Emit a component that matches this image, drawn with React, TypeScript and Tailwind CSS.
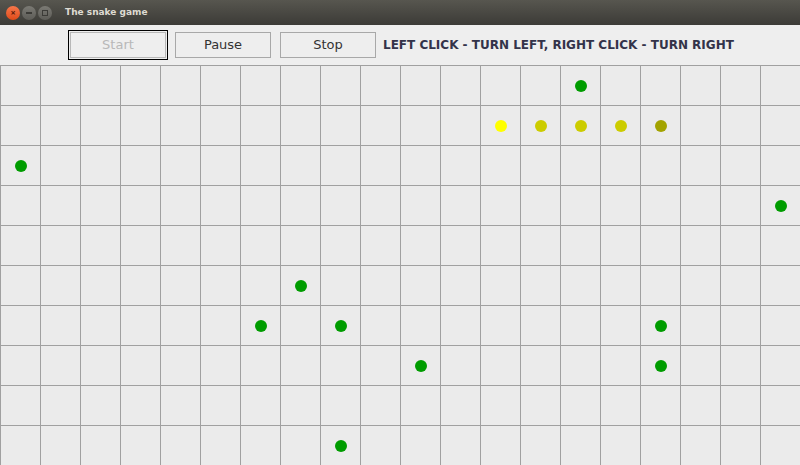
import React from 'react';

type Dot = { col: number; row: number; color: string };

const COLS = 20;
const ROWS = 10;

const dots: Dot[] = [
  { col: 14, row: 0, color: '#009c00' },
  { col: 12, row: 1, color: '#ffff00' },
  { col: 13, row: 1, color: '#cccc00' },
  { col: 14, row: 1, color: '#cccc00' },
  { col: 15, row: 1, color: '#cccc00' },
  { col: 16, row: 1, color: '#a3a300' },
  { col: 0, row: 2, color: '#009c00' },
  { col: 19, row: 3, color: '#009c00' },
  { col: 7, row: 5, color: '#009c00' },
  { col: 6, row: 6, color: '#009c00' },
  { col: 8, row: 6, color: '#009c00' },
  { col: 16, row: 6, color: '#009c00' },
  { col: 10, row: 7, color: '#009c00' },
  { col: 16, row: 7, color: '#009c00' },
  { col: 8, row: 9, color: '#009c00' },
];

function TitleBar() {
  return (
    <div className="h-[25px] flex items-center bg-gradient-to-b from-[#57564f] to-[#3c3b37] px-[6px]">
      <div className="flex items-center gap-[2px]">
        <div className="w-[14px] h-[14px] rounded-full bg-gradient-to-b from-[#f7774a] to-[#df4a16] flex items-center justify-center">
          <span className="text-[9px] leading-none text-[#5a1c0a] font-bold">×</span>
        </div>
        <div className="w-[14px] h-[14px] rounded-full bg-gradient-to-b from-[#7b7a74] to-[#5d5c57] flex items-center justify-center">
          <div className="w-[6px] h-[2px] bg-[#3c3b37]" />
        </div>
        <div className="w-[14px] h-[14px] rounded-full bg-gradient-to-b from-[#7b7a74] to-[#5d5c57] flex items-center justify-center">
          <div className="w-[6px] h-[6px] border border-[#3c3b37]" />
        </div>
      </div>
      <span className="ml-[13px] text-[9px] font-bold text-[#dfdbd2] font-['DejaVu_Sans',sans-serif]">
        The snake game
      </span>
    </div>
  );
}

function Toolbar() {
  return (
    <div className="h-[40px] flex items-center bg-[#eeeeee] font-['DejaVu_Sans',sans-serif] text-[13px]">
      <div className="ml-[68px] w-[100px] h-[30px] border border-black p-px">
        <div className="w-full h-full border border-[#b8b8b8] flex items-center justify-center text-[#b8b8b8]">
          Start
        </div>
      </div>
      <div className="ml-[7px] w-[96px] h-[26px] border border-[#a8a8a8] flex items-center justify-center text-[#333333]">
        Pause
      </div>
      <div className="ml-[9px] w-[96px] h-[26px] border border-[#a8a8a8] flex items-center justify-center text-[#333333]">
        Stop
      </div>
      <span className="ml-[7px] font-bold text-[#33334a] text-[12px]">
        LEFT CLICK - TURN LEFT, RIGHT CLICK - TURN RIGHT
      </span>
    </div>
  );
}

function Board() {
  const cells = [];
  for (let r = 0; r < ROWS; r++) {
    for (let c = 0; c < COLS; c++) {
      const dot = dots.find(d => d.col === c && d.row === r);
      cells.push(
        <div
          key={`${r}-${c}`}
          className="w-[40px] h-[40px] border-l border-t border-[#a0a0a0] bg-[#ebebeb] flex items-center justify-center"
        >
          {dot && (
            <div className="w-[12px] h-[12px] rounded-full" style={{ backgroundColor: dot.color }} />
          )}
        </div>
      );
    }
  }
  return <div className="grid grid-cols-[repeat(20,40px)] bg-[#ebebeb]">{cells}</div>;
}

export default function App() {
  return (
    <div className="w-[800px] h-[465px] overflow-hidden bg-[#eeeeee]">
      <TitleBar />
      <Toolbar />
      <Board />
    </div>
  );
}
